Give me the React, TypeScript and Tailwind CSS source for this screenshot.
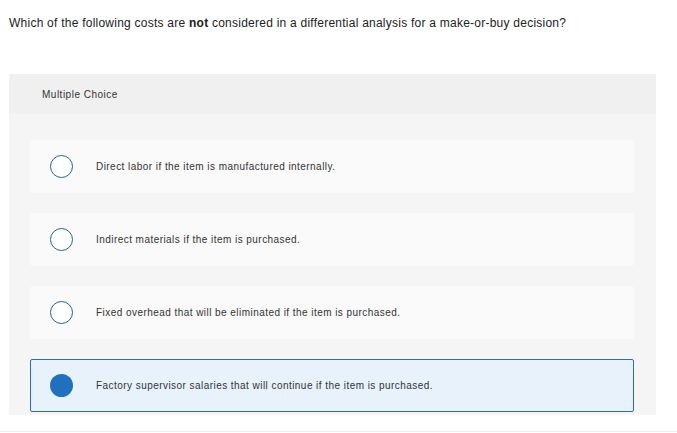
import React from "react";

const options = [
  "Direct labor if the item is manufactured internally.",
  "Indirect materials if the item is purchased.",
  "Fixed overhead that will be eliminated if the item is purchased.",
  "Factory supervisor salaries that will continue if the item is purchased.",
];

export default function App() {
  const selected = 3;
  return (
    <div className="w-[677px] h-[433px] bg-white text-[#333] overflow-hidden" style={{ fontFamily: '"Liberation Sans", Arial, sans-serif' }}>
      <div className="h-[432px] border-b border-[#eeeeee]">
        <p className="pl-[9px] pt-[16px] h-[30px] text-[12px] leading-[14px] tracking-[0.24px] text-[#222]">
          Which of the following costs are <b className="font-bold">not</b> considered in a differential analysis for a make-or-buy decision?
        </p>
        <div className="ml-[9px] w-[647px] mt-[44px] bg-[#f5f5f5]">
          <div className="h-[40px] bg-[#f0f0f0] flex items-center pl-[33px] text-[10px] tracking-[0.5px] text-[#333] rounded-t-[2px]">
            Multiple Choice
          </div>
          <div className="pt-[26px] pb-[3px] pl-[21px] pr-[22px] flex flex-col gap-[20px]">
            {options.map((o, i) => {
              const sel = i === selected;
              return (
                <div
                  key={i}
                  className={
                    sel
                      ? "h-[53px] flex items-center pl-[19px] bg-[#e8f2fb] border border-[#2a6ebb] rounded-[2px]"
                      : "h-[53px] flex items-center pl-[20px] bg-[#fafafa] rounded-[2px]"
                  }
                >
                  {sel ? (
                    <span className="w-[23px] h-[23px] rounded-full bg-[#2070c0] shrink-0" />
                  ) : (
                    <span className="w-[23px] h-[23px] rounded-full border-[1.5px] border-[#1f63a6] bg-white shrink-0" />
                  )}
                  <span className="ml-[23px] text-[10px] tracking-[0.45px] text-[#333]">{o}</span>
                </div>
              );
            })}
          </div>
        </div>
      </div>
    </div>
  );
}
